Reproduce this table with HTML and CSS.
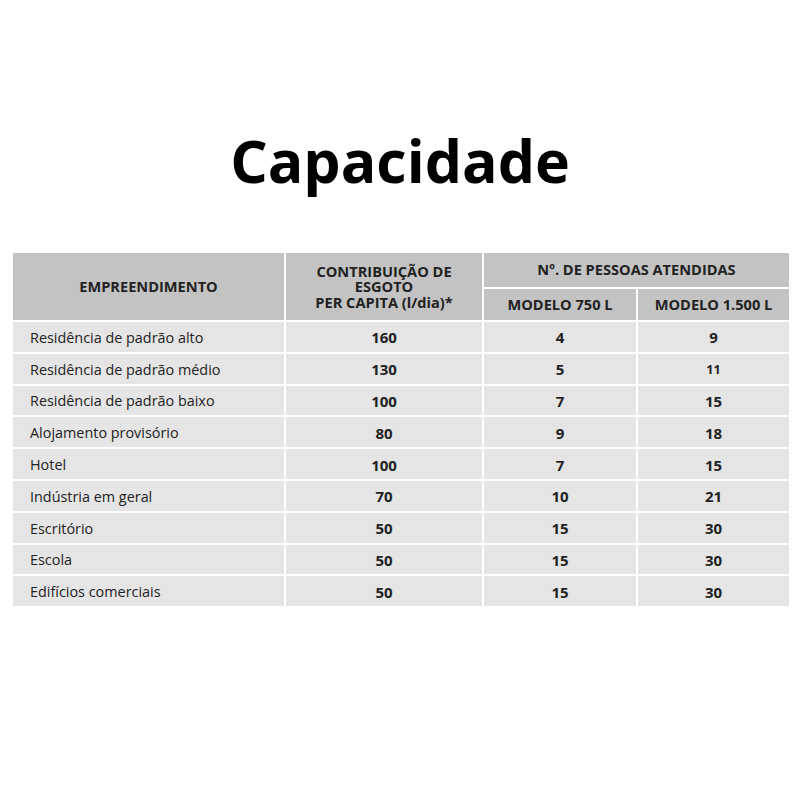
FILE: index.html
```html
<!DOCTYPE html>
<html lang="pt">
<head>
<meta charset="utf-8">
<title>Capacidade</title>
<link rel="stylesheet" href="styles.css">
</head>
<body>
<main class="page">
  <h1 class="title">Capacidade</h1>
  <table class="cap">
    <colgroup>
      <col class="c1"><col class="c2"><col class="c3"><col class="c4">
    </colgroup>
    <thead>
      <tr class="h1r">
        <th rowspan="2">EMPREENDIMENTO</th>
        <th rowspan="2" class="contrib">CONTRIBUIÇÃO DE<br>ESGOTO<br>PER CAPITA (l/dia)*</th>
        <th colspan="2">Nº. DE PESSOAS ATENDIDAS</th>
      </tr>
      <tr class="h2r">
        <th>MODELO 750 L</th>
        <th>MODELO 1.500 L</th>
      </tr>
    </thead>
    <tbody>
      <tr><td>Residência de padrão alto</td><td>160</td><td>4</td><td>9</td></tr>
      <tr><td>Residência de padrão médio</td><td>130</td><td>5</td><td class="small">11</td></tr>
      <tr><td>Residência de padrão baixo</td><td>100</td><td>7</td><td>15</td></tr>
      <tr><td>Alojamento provisório</td><td>80</td><td>9</td><td>18</td></tr>
      <tr><td>Hotel</td><td>100</td><td>7</td><td>15</td></tr>
      <tr><td>Indústria em geral</td><td>70</td><td>10</td><td>21</td></tr>
      <tr><td>Escritório</td><td>50</td><td>15</td><td>30</td></tr>
      <tr><td>Escola</td><td>50</td><td>15</td><td>30</td></tr>
      <tr><td>Edifícios comerciais</td><td>50</td><td>15</td><td>30</td></tr>
    </tbody>
  </table>
</main>
</body>
</html>
```
FILE: styles.css
```css
html, body {
  margin: 0;
  padding: 0;
  background: #fff;
}
.page {
  width: 800px;
  padding-top: 131px;
  font-family: "Open Sans", "Liberation Sans", sans-serif;
  color: #222;
}
.title {
  margin: 0;
  height: 58px;
  font-size: 59px;
  line-height: 58px;
  font-weight: 700;
  text-align: center;
  color: #000;
  letter-spacing: 0;
}
.cap {
  margin: 62px 0 0 11px;
  width: 780px;
  border-collapse: separate;
  border-spacing: 2px;
  table-layout: fixed;
}
.c1 { width: 271px; }
.c2 { width: 196px; }
.c3 { width: 152px; }
.c4 { width: 151px; }
.cap th {
  background: #c3c3c3;
  font-size: 14.6px;
  font-weight: 700;
  color: #222;
  padding: 0;
  text-align: center;
  line-height: 15.5px;
}
.cap th.contrib { padding-top: 1px; }
.h1r th { height: 34px; }
.h2r th { height: 31px; }
.cap td {
  background: #e5e5e5;
  height: 29.8px;
  padding: 1px 0 0 0;
  box-sizing: border-box;
  text-align: center;
  font-size: 15px;
  font-weight: 700;
  color: #222;
}
.cap td:first-child {
  text-align: left;
  padding-left: 17px;
  font-size: 14.4px;
  font-weight: 400;
}
.cap td.small { font-size: 12.5px; }
```
